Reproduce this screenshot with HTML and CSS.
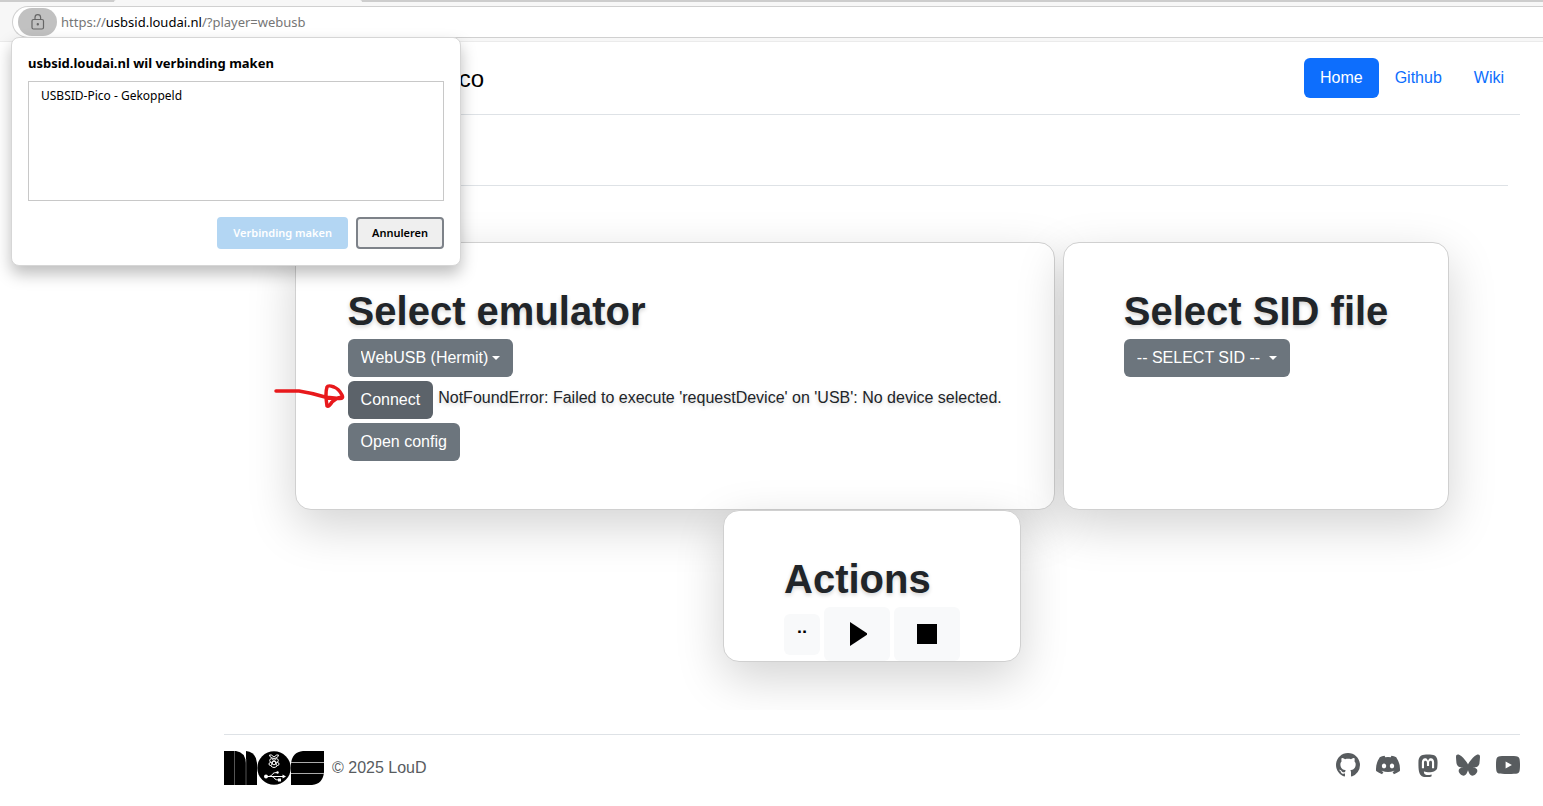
FILE: index.html
```html
<!DOCTYPE html>
<html lang="nl">
<head>
<meta charset="utf-8">
<meta name="viewport" content="width=device-width, initial-scale=1">
<title>USBSID-Pico</title>
<link rel="stylesheet" href="styles.css">
</head>
<body>
<svg class="sprite" aria-hidden="true">
  <symbol id="logo" viewBox="0 0 100 34">
    <path d="M0 0H12Q21 1 22 12V34H0Z"/>
    <path d="M22 0Q32 1 33 12V34H22Z"/>
    <path d="M10.500 0V34M22 8V34" stroke="#555" stroke-width="1"/>
    <circle cx="50" cy="17" r="16.700"/>
    <path d="M79 0H100V21Q99 33 88 34H67V13Q68 1 79 0Z"/>
    <path d="M67 11.500H100M67 22.500H100" stroke="#aaa" stroke-width="1"/>
    <g fill="none" stroke="#fff" stroke-width="1">
      <path d="M50 6Q47 3 45.500 4Q45.500 6 48 7Q50 8 52 7Q54.500 6 54.500 4Q53 3 50 6"/>
      <circle cx="47.500" cy="9.500" r="1.800"/><circle cx="52.500" cy="9.500" r="1.800"/>
      <circle cx="50" cy="12" r="1.800"/><circle cx="46.500" cy="13" r="1.500"/><circle cx="53.500" cy="13" r="1.500"/>
      <path d="M46.500 14.500Q50 18.500 53.500 14.500"/>
      <path d="M42 25.500H60M45 25.500Q48 25 49 22.500Q50 21.500 53 21.500M48 25.500Q50 26 51 28Q52 29 55 29"/>
    </g>
    <g fill="#fff"><circle cx="42" cy="25.500" r="2"/><circle cx="53.500" cy="21.500" r="1.200"/><path d="M58.500 23.500L62 25.500L58.500 27.500ZM54 27.500H57V30.500H54Z"/></g>
  </symbol>
</svg>

<div class="chrome">
  <div class="tabstrip"><div class="tab"></div></div>
  <div class="toolbar">
    <div class="address">
      <button class="site-info" type="button" aria-label="Site-informatie">
        <svg width="14" height="16" viewBox="0 0 14 16" fill="none" stroke="#666" stroke-width="1.200"><rect x="1" y="5.500" width="11.500" height="9.500" rx="1.500"/><path d="M4 5.500V3.500a2.800 2.800 0 0 1 5.600 0V5.500"/><circle cx="6.800" cy="10.300" r=".6" fill="#666"/></svg>
      </button>
      <span class="url">https://<b>usbsid.loudai.nl</b>/?player=webusb</span>
    </div>
  </div>
</div>

<section class="dialog" role="dialog" aria-labelledby="dialog-title">
  <h2 id="dialog-title">usbsid.loudai.nl wil verbinding maken</h2>
  <ul class="devices"><li>USBSID-Pico - Gekoppeld</li></ul>
  <div class="dialog-actions">
    <button class="dlg-btn primary" type="button" disabled>Verbinding maken</button>
    <button class="dlg-btn" type="button">Annuleren</button>
  </div>
</section>

<div class="container">
  <header class="site-header">
    <a class="brand" href="#"><svg class="logo" aria-hidden="true"><use href="#logo"/></svg><span>USBSID-Pico</span></a>
    <nav class="nav">
      <a class="nav-link active" href="#">Home</a>
      <a class="nav-link" href="#">Github</a>
      <a class="nav-link" href="#">Wiki</a>
    </nav>
  </header>

  <main>
    <hr>
    <div class="cards">
      <section class="card">
        <h1>Select emulator</h1>
        <div class="stack">
          <div class="dropdown">
            <select class="btn" aria-label="Select emulator"><option>WebUSB (Hermit)</option></select>
          </div>
          <div class="row">
            <button class="btn pressed" type="button">Connect</button>
            <span class="status">NotFoundError: Failed to execute 'requestDevice' on 'USB': No device selected.</span>
          </div>
          <div class="row"><button class="btn" type="button">Open config</button></div>
        </div>
        <svg class="arrow" width="76" height="28" viewBox="0 0 76 28" fill="none" stroke="#e8191c" stroke-width="3.500" stroke-linecap="round" stroke-linejoin="round" aria-hidden="true"><path d="M5 10H28Q41 12 54 16L68 17.500Q73 18 71 14Q68 8 63 6Q57 4 56 6Q54 12 56 25Q58 26 61 21Q65 17 71 16"/></svg>
      </section>
      <section class="card wide">
        <h1>Select SID file</h1>
        <div class="dropdown">
          <select class="btn" aria-label="Select SID file"><option>-- SELECT SID --&nbsp;</option></select>
        </div>
      </section>
    </div>
    <div class="cards">
      <section class="card wide actions">
        <h1>Actions</h1>
        <div class="players">
          <button class="light small" type="button">¨</button>
          <button class="light" type="button" aria-label="Play"><svg width="20" height="24" viewBox="0 0 20 24"><path d="M3 0L21 12L3 24Z"/></svg></button>
          <button class="light" type="button" aria-label="Stop"><svg width="20" height="24" viewBox="0 0 20 24"><path d="M0 2H20V22H0Z"/></svg></button>
        </div>
      </section>
    </div>
  </main>

  <footer class="site-footer">
    <div class="copyright"><svg class="logo" aria-hidden="true"><use href="#logo"/></svg><span>© 2025 LouD</span></div>
    <div class="social">
      <a href="#" aria-label="GitHub"><svg viewBox="0 0 16 16"><path d="M8 0C3.580 0 0 3.580 0 8c0 3.540 2.290 6.530 5.470 7.590.4.070.55-.17.55-.38 0-.19-.01-.82-.01-1.490-2.010.37-2.530-.49-2.690-.94-.09-.23-.48-.94-.82-1.130-.28-.15-.68-.52-.01-.53.63-.01 1.080.58 1.230.82.72 1.210 1.870.87 2.330.66.07-.52.28-.87.51-1.070-1.780-.2-3.640-.89-3.640-3.950 0-.87.31-1.590.82-2.150-.08-.2-.36-1.020.08-2.120 0 0 .67-.21 2.200.82.64-.18 1.320-.27 2-.27s1.360.09 2 .27c1.530-1.040 2.200-.82 2.200-.82.44 1.100.16 1.920.08 2.120.51.56.82 1.270.82 2.150 0 3.070-1.870 3.750-3.650 3.950.29.25.54.73.54 1.480 0 1.070-.01 1.930-.01 2.200 0 .21.15.46.55.38A8.010 8.010 0 0 0 16 8c0-4.420-3.580-8-8-8"/></svg></a>
      <a href="#" aria-label="Discord"><svg viewBox="0 0 16 16"><path d="M13.545 2.907a13.200 13.200 0 0 0-3.257-1.011.05.05 0 0 0-.052.025c-.141.250-.297.577-.406.833a12.200 12.200 0 0 0-3.658 0 8 8 0 0 0-.412-.833.050.050 0 0 0-.052-.025c-1.125.194-2.220.534-3.257 1.011a.04.04 0 0 0-.021.018C.356 6.024-.213 9.047.066 12.032q.003.022.021.037a13.300 13.300 0 0 0 3.995 2.020.050.050 0 0 0 .056-.019q.463-.630.818-1.329a.050.050 0 0 0-.010-.059l-.018-.011a9 9 0 0 1-1.248-.595.050.050 0 0 1-.020-.066l.015-.019q.127-.095.248-.195a.050.050 0 0 1 .051-.007c2.619 1.196 5.454 1.196 8.041 0a.050.050 0 0 1 .053.007q.121.100.248.195a.050.050 0 0 1-.004.085 8 8 0 0 1-1.249.594.050.050 0 0 0-.030.030.050.050 0 0 0 .003.041c.240.465.515.909.817 1.329a.050.050 0 0 0 .056.019 13.200 13.200 0 0 0 4.001-2.020.050.050 0 0 0 .021-.037c.334-3.451-.559-6.449-2.366-9.106a.030.030 0 0 0-.020-.019m-8.198 7.307c-.789 0-1.438-.724-1.438-1.612s.637-1.613 1.438-1.613c.807 0 1.450.730 1.438 1.613 0 .888-.637 1.612-1.438 1.612m5.316 0c-.788 0-1.438-.724-1.438-1.612s.637-1.613 1.438-1.613c.807 0 1.451.730 1.438 1.613 0 .888-.631 1.612-1.438 1.612"/></svg></a>
      <a href="#" aria-label="Mastodon"><svg viewBox="0 0 16 16"><path d="M11.190 12.195c2.016-.240 3.770-1.475 3.990-2.603.348-1.778.320-4.339.320-4.339 0-3.470-2.286-4.488-2.286-4.488C12.062.238 10.083.017 8.027 0h-.050C5.920.017 3.942.238 2.790.765c0 0-2.285 1.017-2.285 4.488l-.002.662c-.004.640-.007 1.350.011 2.091.083 3.394.626 6.740 3.780 7.570 1.454.383 2.703.463 3.709.408 1.823-.100 2.847-.647 2.847-.647l-.060-1.317s-1.303.410-2.767.360c-1.450-.050-2.980-.156-3.215-1.928a4 4 0 0 1-.033-.496s1.424.346 3.228.428c1.103.050 2.137-.064 3.188-.189zm1.613-2.470H11.130v-4.080c0-.859-.364-1.295-1.091-1.295-.804 0-1.207.517-1.207 1.541v2.233H7.168V5.890c0-1.024-.403-1.541-1.207-1.541-.727 0-1.091.436-1.091 1.296v4.079H3.197V5.522q0-1.288.660-2.046c.456-.505 1.052-.764 1.793-.764.856 0 1.504.328 1.933.983L8 4.390l.417-.695c.429-.655 1.077-.983 1.934-.983.740 0 1.336.259 1.791.764q.662.757.661 2.046z" transform="translate(1.200 1) scale(.85 .95)"/></svg></a>
      <a href="#" aria-label="Bluesky"><svg viewBox="0 0 16 16"><path d="M3.468 1.948C5.303 3.325 7.276 6.118 8 7.616c.725-1.498 2.698-4.290 4.532-5.668C13.855.955 16 .186 16 2.632c0 .489-.280 4.105-.444 4.692-.572 2.040-2.653 2.561-4.504 2.246 3.236.551 4.060 2.375 2.281 4.200-3.376 3.464-4.852-.870-5.230-1.980-.070-.204-.103-.300-.103-.218 0-.081-.033.014-.102.218-.379 1.110-1.855 5.444-5.231 1.980-1.778-1.825-.955-3.650 2.280-4.200-1.850.315-3.932-.205-4.503-2.246C.280 6.737 0 3.120 0 2.632 0 .186 2.145.955 3.468 1.948"/></svg></a>
      <a href="#" aria-label="YouTube"><svg viewBox="0 0 16 16"><path fill-rule="evenodd" d="M8 2C11 2 13.500 2.100 14.200 2.300A2 2 0 0 1 15.600 3.700C15.900 4.700 16 6.500 16 8S15.900 11.300 15.600 12.300A2 2 0 0 1 14.200 13.700C13.500 13.900 11 14 8 14S2.500 13.900 1.800 13.700A2 2 0 0 1 .4 12.300C.1 11.300 0 9.500 0 8S.1 4.700.4 3.700A2 2 0 0 1 1.800 2.300C2.500 2.100 5 2 8 2ZM6.400 5.600V10.300L10.600 8Z"/></svg></a>
    </div>
  </footer>
</div>
</body>
</html>
```
FILE: styles.css
```css
*, *::before, *::after { box-sizing: border-box; }

body {
  margin: 0;
  background: #fff;
  color: #212529;
  font: 16px/24px Arial, "Liberation Sans", sans-serif;
}

h1, h2, ul { margin: 0; padding: 0; }
button, select { font: inherit; cursor: pointer; }
a { text-decoration: none; }
.sprite { display: none; }

/* Browser bar */
.chrome {
  font-family: "Segoe UI", "Noto Sans", sans-serif;
  background: #f7f7f7;
  border-bottom: 1px solid #ebebeb;
}
.tabstrip { height: 2px; background: #cdcdcd; padding-left: 114px; }
.tab { width: 248px; height: 2px; background: #f7f7f7; border-radius: 2px 2px 0 0; }
.toolbar { padding: 4px 0 3px 12px; }
.address {
  display: flex;
  align-items: center;
  gap: 4px;
  height: 32px;
  padding-left: 5px;
  background: #fff;
  border: 1px solid #d0d0d0;
  border-right: 0;
  border-radius: 16px 0 0 16px;
}
.site-info {
  display: flex;
  align-items: center;
  justify-content: center;
  width: 39px;
  height: 28px;
  padding: 0;
  border: 0;
  border-radius: 14px;
  background: #c1c1c1;
}
.url { font-size: 13px; color: #767676; }
.url b { font-weight: 400; color: #000; }

/* Device chooser */
.dialog {
  position: absolute;
  z-index: 2;
  top: 37px;
  left: 11px;
  width: 450px;
  padding: 16px;
  background: #fff;
  border: 1px solid #d6d6d6;
  border-radius: 8px;
  box-shadow: 0 8px 16px rgba(0, 0, 0, .26);
  color: #000;
  font: 12px/16px "Segoe UI", "Noto Sans", sans-serif;
}
.dialog h2 { font-size: 13px; line-height: 19px; margin-bottom: 8px; }
.devices {
  height: 120px;
  padding: 6px 12px;
  border: 1px solid #c8c8c8;
  list-style: none;
}
.dialog-actions { display: flex; justify-content: flex-end; gap: 8px; margin-top: 16px; }
.dlg-btn {
  height: 32px;
  padding: 0 14px;
  border: 2px solid #7d8289;
  border-radius: 4px;
  background: #efefef;
  color: #000;
  font-size: 11px;
  font-weight: 600;
}
.dlg-btn.primary { border-color: #b3d6f3; background: #b3d6f3; color: #fff; }

/* Page */
.container { max-width: 1320px; margin: 0 11px 0 auto; padding: 0 12px; }
.site-header {
  display: flex;
  justify-content: space-between;
  padding: 16px 0;
  margin-bottom: 24px;
  border-bottom: 1px solid #dee2e6;
}
.brand { display: flex; align-items: center; gap: 16px; padding-top: 2px; color: #000; font-size: 24px; }
.logo { width: 100px; height: 34px; }
.nav { display: flex; }
.nav-link { padding: 8px 16px; border-radius: 6px; color: #0d6efd; }
.nav-link.active { background: #0d6efd; color: #fff; }

main { margin: 0 -12px; padding: 46px 12px 48px; overflow: hidden; }
hr { margin: 0 12px 56px; border: 0; border-top: 1px solid #dee2e6; }
.cards { display: flex; justify-content: center; gap: 8px; }
.card {
  position: relative;
  padding: 48px 52px;
  background: #fff;
  border: 1px solid #d0d0d0;
  border-radius: 16px;
  box-shadow: 0 16px 48px rgba(0, 0, 0, .175);
  text-shadow: 0 2px 4px rgba(0, 0, 0, .18);
}
.card.wide { padding: 48px 60px; }
.card.actions { padding-bottom: 0; }
h1 { margin-bottom: 8px; font-size: 40px; line-height: 40px; }
.stack { display: flex; flex-direction: column; align-items: flex-start; gap: 4px; }
.row { display: flex; gap: 5px; }
.btn {
  display: block;
  height: 38px;
  padding: 0 13px;
  border: 0;
  border-radius: 6px;
  background: #6c757d;
  color: #fff;
  text-shadow: none;
}
.btn.pressed { background: #5c636a; }
select.btn { appearance: none; padding-right: 24px; }
.dropdown { position: relative; width: max-content; }
.dropdown::after {
  content: "";
  position: absolute;
  top: 17px;
  right: 13px;
  border: 4px solid transparent;
  border-top-color: #fff;
  border-bottom: 0;
  pointer-events: none;
}
.status { padding-top: 5px; }
.arrow { position: absolute; left: -25px; top: 138px; }

.players { display: flex; align-items: center; gap: 4px; }
.light {
  display: flex;
  align-items: center;
  justify-content: center;
  width: 66px;
  height: 54px;
  padding: 0;
  border: 0;
  border-radius: 6px;
  background: #f8f9fa;
  color: #000;
}
.light.small { width: 36px; height: 41px; padding-top: 10px; font-size: 24px; font-weight: 700; }

.site-footer {
  display: flex;
  align-items: flex-start;
  justify-content: space-between;
  margin-top: 24px;
  padding: 16px 0;
  border-top: 1px solid #dee2e6;
  color: #585c5f;
}
.copyright { display: flex; align-items: center; gap: 8px; }
.social { display: flex; gap: 16px; padding-top: 2px; }
.social a { display: flex; color: inherit; }
.social svg { width: 24px; height: 24px; fill: currentColor; }
```
